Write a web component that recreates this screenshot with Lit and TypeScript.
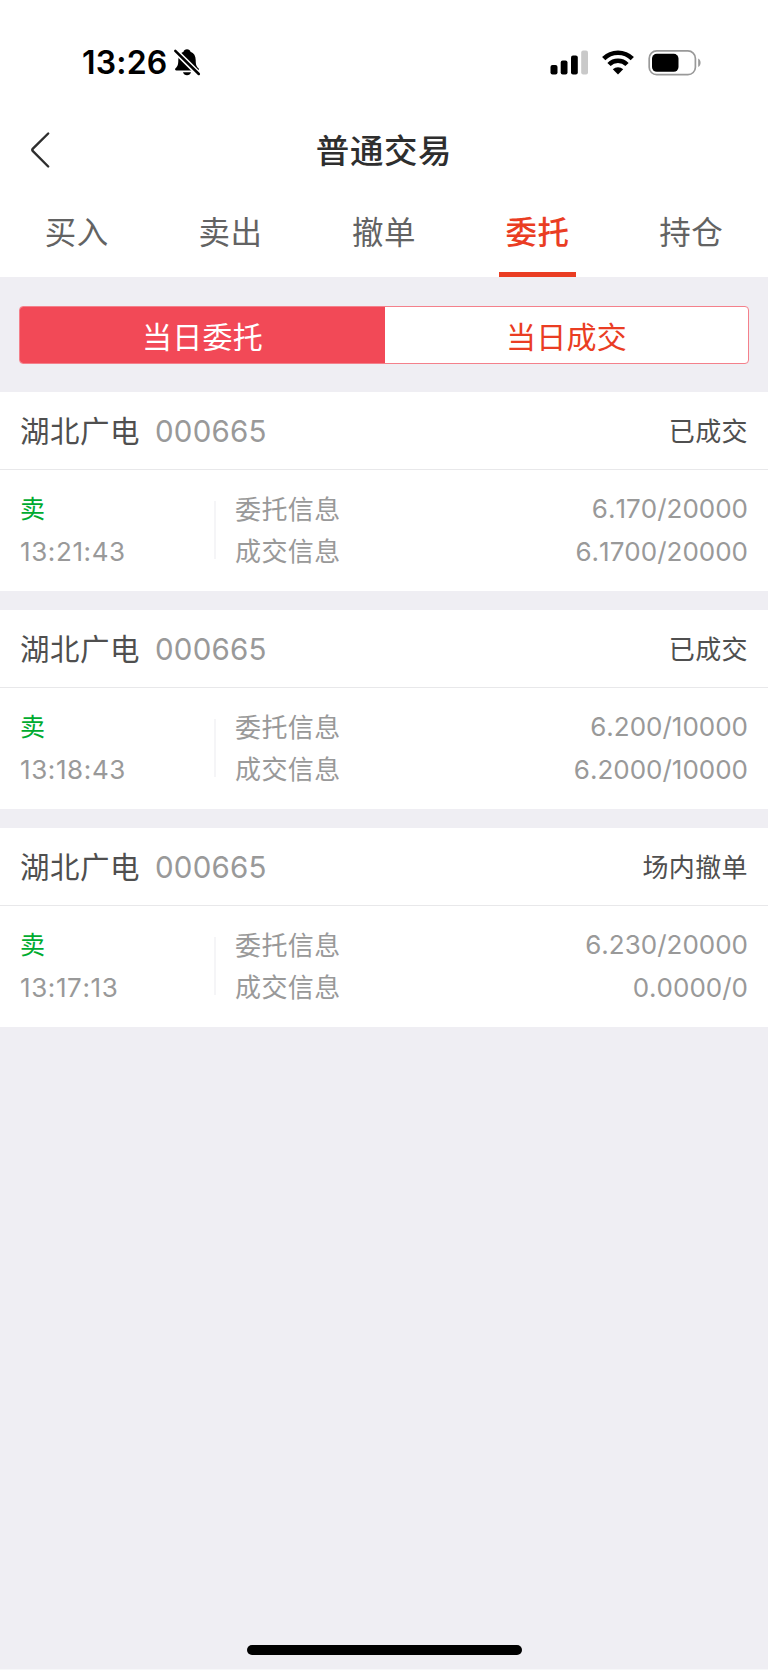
import { LitElement, html, css } from "lit";
import { customElement, property, state } from "lit/decorators.js";
import { classMap } from "lit/directives/class-map.js";

interface Order {
  name: string;
  code: string;
  status: string;
  side: string;
  time: string;
  entrust: string;
  deal: string;
}

const ORDERS: Order[] = [
  { name: "湖北广电", code: "000665", status: "已成交", side: "卖", time: "13:21:43", entrust: "6.170/20000", deal: "6.1700/20000" },
  { name: "湖北广电", code: "000665", status: "已成交", side: "卖", time: "13:18:43", entrust: "6.200/10000", deal: "6.2000/10000" },
  { name: "湖北广电", code: "000665", status: "场内撤单", side: "卖", time: "13:17:13", entrust: "6.230/20000", deal: "0.0000/0" },
];

@customElement("status-bar")
class StatusBar extends LitElement {
  static styles = css`
    :host {
      display: flex;
      justify-content: space-between;
      box-sizing: border-box;
      height: 110px;
      padding: 43px 66px 0 82px;
    }
    .left, .right { display: flex; align-items: center; height: 39px; }
    .time {
      width: 85px;
      margin-right: 6px;
      font-size: 32px;
      letter-spacing: 0.200px;
      font-weight: 600;
      line-height: 39px;
      color: #000;
      white-space: nowrap;
    }
    svg { display: block; }
    .wifi { margin-left: 13px; }
    .battery { margin-left: 14px; }
  `;
  render() {
    return html`
      <div class="left">
        <span class="time">13:26</span>
        <svg width="28" height="30" viewBox="0 0 28 30">
          <path d="M14 1.200c1.900 0 3.200 1 3.500 2.500 3.500 1.200 5.200 4.200 5.200 8.200 0 5 1 6.600 2.800 8.300.8.9.4 2.200-.9 2.200H3.400c-1.300 0-1.700-1.300-.9-2.200 1.800-1.700 2.800-3.300 2.800-8.300 0-4 1.700-7 5.200-8.200C10.800 2.200 12.100 1.200 14 1.200z" />
          <path d="M10 24.300h8c-.5 1.900-2 3-4 3s-3.500-1.100-4-3z" />
          <path d="M1 1.500L27.500 28" stroke="#fff" stroke-width="5.600" />
          <path d="M2.300 2.800L25.800 26" stroke="#000" stroke-width="2.500" stroke-linecap="round" />
        </svg>
      </div>
      <div class="right">
        <svg width="39" height="26" viewBox="0 0 39 26">
          <rect x="0.500" y="15" width="7" height="9.500" rx="2" />
          <rect x="10.700" y="10.500" width="6.800" height="14" rx="2" />
          <rect x="21" y="5.500" width="6.800" height="19" rx="2" />
          <rect x="31.200" y="0.500" width="6.800" height="24" rx="2" fill="#c9c9c9" />
        </svg>
        <svg class="wifi" width="32" height="26" viewBox="0 0 32 26">
          <g fill="none" stroke="#000" stroke-width="4.600">
            <path d="M1.700 8.700a20.200 20.200 0 0 1 28.600 0" />
            <path d="M7 14.500a12.700 12.700 0 0 1 18 0" />
          </g>
          <path d="M16 24.500l-5.200-5.200a7.400 7.400 0 0 1 10.400 0z" />
        </svg>
        <svg class="battery" width="54" height="26" viewBox="0 0 54 26">
          <rect x="1.200" y="0.900" width="46.200" height="23.800" rx="7.500" fill="none" stroke="#999" stroke-width="1.700" />
          <rect x="4" y="3.800" width="26.500" height="18" rx="4.800" />
          <path d="M50.200 8.600c3.200 1.400 3.200 7 0 8.400z" fill="#999" />
        </svg>
      </div>
    `;
  }
}

@customElement("order-card")
class OrderCard extends LitElement {
  @property({ attribute: false }) order!: Order;
  static styles = css`
    :host { display: block; background: #fff; }
    .head {
      display: flex;
      align-items: center;
      height: 77px;
      padding: 0 20px;
      border-bottom: 1px solid #e8e8ea;
    }
    .name { padding-bottom: 4px; font-size: 29.500px; letter-spacing: 0.500px; color: #4f4f4f; }
    .code { flex: 1; margin-left: 15px; font-size: 29.500px; letter-spacing: 0.200px; color: #999; }
    .status { padding-bottom: 2px; font-size: 26px; letter-spacing: 0.400px; color: #4f4f4f; }
    .time { letter-spacing: 0.600px; }
    .time, .values { font-kerning: none; }
    .body {
      display: flex;
      align-items: center;
      height: 121px;
      padding: 0 20px;
      color: #999;
      font-size: 26px;
      line-height: 42.500px;
    }
    .when { width: 194px; }
    .side { color: #00ab30; font-size: 25px; }
    .line { width: 2px; height: 58px; margin-bottom: 2px; background: #f5f5f7; }
    .labels { flex: 1; margin-left: 19px; padding-top: 1px; letter-spacing: 0.400px; }
    .values { text-align: right; }
  `;
  render() {
    const o = this.order;
    return html`
      <div class="head">
        <span class="name">${o.name}</span>
        <span class="code">${o.code}</span>
        <span class="status">${o.status}</span>
      </div>
      <div class="body">
        <div class="when">
          <div class="side">${o.side}</div>
          <div class="time">${o.time}</div>
        </div>
        <div class="line"></div>
        <div class="labels">
          <div>委托信息</div>
          <div>成交信息</div>
        </div>
        <div class="values">
          <div>${o.entrust}</div>
          <div>${o.deal}</div>
        </div>
      </div>
    `;
  }
}

@customElement("app-root")
class AppRoot extends LitElement {
  @state() private tab = 3;
  @state() private segment = 0;
  static styles = css`
    :host {
      display: flex;
      flex-direction: column;
      box-sizing: border-box;
      width: 768px;
      height: 1670px;
      overflow: hidden;
      background: #efeef3;
      border-bottom: 1px solid #f7f7f9;
      font-family: Inter, "Noto Sans CJK SC", sans-serif;
    }
    .top { background: #fff; height: 277px; }
    .nav {
      display: grid;
      grid-template-columns: 60px 1fr 60px;
      align-items: center;
      height: 80px;
    }
    .back { display: block; margin-left: 29px; }
    .title {
      padding-bottom: 4px;
      text-align: center;
      font-size: 33.500px;
      letter-spacing: 0.600px;
      font-weight: 500;
      color: #2e2e2e;
    }
    .tabs { display: grid; grid-template-columns: repeat(5, 1fr); height: 87px; }
    .tab {
      display: flex;
      flex-direction: column;
      align-items: center;
      justify-content: space-between;
      color: #636363;
      font-size: 31.500px;
      letter-spacing: 0.500px;
      line-height: 86px;
    }
    .label { height: 82px; }
    .bar { width: 76.800px; height: 5px; }
    .active { color: #ea3d23; font-weight: 500; }
    .active .bar { background: #ea3d23; }
    .segments {
      display: grid;
      grid-template-columns: 365px 1fr;
      box-sizing: border-box;
      height: 58px;
      margin: 29px 19px 28px;
      border: 1px solid #f4808b;
      border-radius: 4px;
      background: #fff;
      overflow: hidden;
    }
    .segment {
      text-align: center;
      font-size: 30px;
      letter-spacing: 0.300px;
      line-height: 60px;
      color: #ea3d23;
    }
    .chosen { background: #f24957; color: #fff; }
    .orders { display: flex; flex-direction: column; gap: 19px; }
    .home {
      width: 275px;
      height: 10px;
      margin: auto auto 14.500px;
      border-radius: 5px;
      background: #000;
    }
  `;
  render() {
    return html`
      <div class="top">
        <status-bar></status-bar>
        <div class="nav">
          <svg class="back" width="24" height="40" viewBox="0 0 24 40">
            <path d="M19.200 3.500L3.900 18.600q-1.200 1.300 0 2.600L19.200 36.500" fill="none" stroke="#2e2e2e" stroke-width="2.400" stroke-linecap="round" />
          </svg>
          <div class="title">普通交易</div>
        </div>
        <div class="tabs">
          ${["买入", "卖出", "撤单", "委托", "持仓"].map(
            (t, i) => html`<div class=${classMap({ tab: true, active: i === this.tab })} @click=${() => (this.tab = i)}>
              <span class="label">${t}</span><span class="bar"></span>
            </div>`
          )}
        </div>
      </div>
      <div class="segments">
        ${["当日委托", "当日成交"].map(
          (t, i) => html`<div class=${classMap({ segment: true, chosen: i === this.segment })} @click=${() => (this.segment = i)}>${t}</div>`
        )}
      </div>
      <div class="orders">${ORDERS.map((o) => html`<order-card .order=${o}></order-card>`)}</div>
      <div class="home"></div>
    `;
  }
}
